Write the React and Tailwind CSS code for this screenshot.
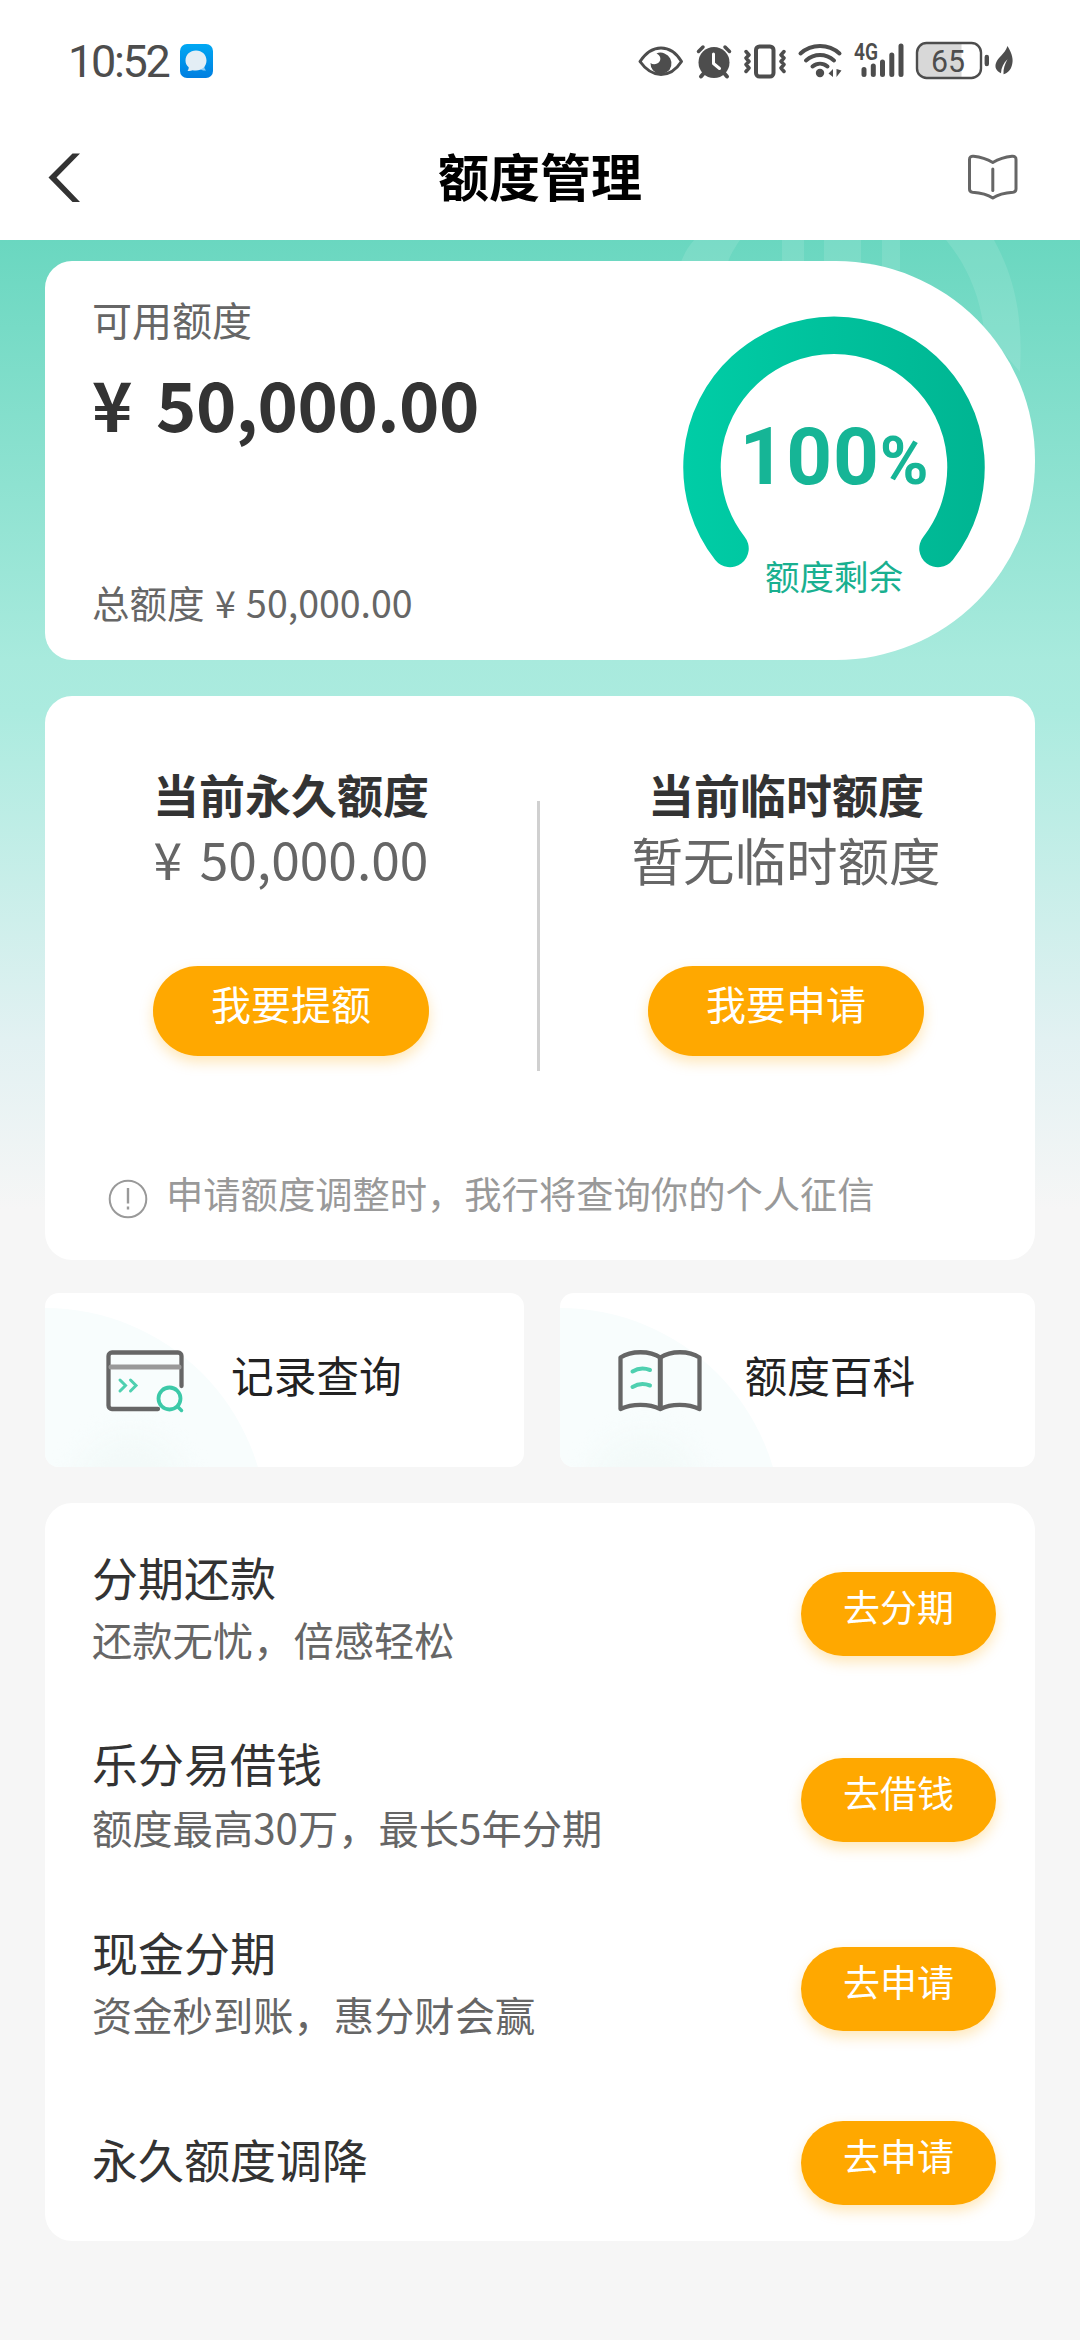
import clsx from "clsx";

const plans = [
  { title: "分期还款", desc: "还款无忧，倍感轻松", action: "去分期", row: "h-[186px]", pad: "pb-[16px]" },
  { title: "乐分易借钱", desc: "额度最高30万，最长5年分期", action: "去借钱", row: "h-[186px]", pad: "pb-[15px]", gap: "mt-[2px]" },
  { title: "现金分期", desc: "资金秒到账，惠分财会赢", action: "去申请", row: "h-[192px]", pad: "pb-[16px]" },
  { title: "永久额度调降", action: "去申请", row: "h-[156px]", pad: "pb-[11px]" },
];

function StatusIcons() {
  return (
    <svg width="380" height="60" viewBox="636 30 380 60" fill="none" stroke="#4d4d4d" strokeLinecap="round" strokeLinejoin="round">
      {/* eye */}
      <path d="M640 60.500C646 51.500 653 47 661 47s15 4.500 20.500 13.500C676 69 669 73.500 661 73.500S646 69 640 60.500z" strokeWidth="3" />
      <path d="M656.500 52.500c2.500-1.300 5.500-1.300 8 0a10.500 10.500 0 1 1-14 9.500c2.500 2 7 1.500 9-1.500 2-2.800.5-6.500-3-8z" fill="#4d4d4d" stroke="none" />
      {/* alarm */}
      <circle cx="714" cy="61.500" r="15.500" fill="#4d4d4d" stroke="none" />
      <path d="M698.500 50.500l4.500-4.500M729.500 50.500l-4.500-4.500" strokeWidth="3.500" />
      <path d="M704 72l-3 3.500M724 72l3 3.500" strokeWidth="4" />
      <path d="M713.500 53v9.500l6 5" stroke="#fff" strokeWidth="3" />
      {/* vibrate */}
      <rect x="756" y="45.500" width="17.500" height="30" rx="3.500" strokeWidth="4" />
      <path d="M746 50.500l3 3.500-3 3 3 3.500-3 3 3 3.500-3 3.500M784 50.500l-3 3.500 3 3-3 3.500 3 3-3 3.500 3 3.500" strokeWidth="3.500" />
      {/* wifi */}
      <path d="M800.500 52.500c11-10 28-10 39 0M806 59.500c8.500-7.200 19.500-7.200 28 0M812.500 65.500c4.500-3.800 10.500-3.800 15 0" strokeWidth="4" />
      <circle cx="820" cy="72" r="4.200" fill="#4d4d4d" stroke="none" />
      <path d="M833 68v8l-4.500-3.500zM836.500 68v8l5-6.500z" fill="#4d4d4d" stroke="none" />
      {/* signal */}
      <path d="M864 68.500v5M873.300 65v8.500M882.500 61v12.500M891.800 54v19.500M901 45v28.500" strokeWidth="5" />
      <text x="854" y="59" fontSize="23" fontWeight="600" textLength="24" lengthAdjust="spacingAndGlyphs" fill="#4d4d4d" stroke="none" fontFamily="Roboto, sans-serif">4G</text>
      {/* battery */}
      <path d="M927 42h34.500v35H927a9.500 9.500 0 0 1-9.500-9.500v-16A9.500 9.500 0 0 1 927 42z" fill="#d8d8d8" stroke="none" />
      <rect x="917" y="42" width="64" height="35" rx="9.500" strokeWidth="2.400" />
      <path d="M986.800 56v7" strokeWidth="4.400" />
      <text x="931" y="70.500" fontSize="32" textLength="34" lengthAdjust="spacingAndGlyphs" fill="#4d4d4d" stroke="none" fontFamily="Roboto, sans-serif">65</text>
      {/* leaf */}
      <path d="M1007.500 45c5 8 6 14 4.500 19-1.300 5-4 8-8.500 9.300-.5-5.500 1.500-10.500 4-15-4 4-6.300 8.500-6.500 14C996 70 994.500 66 996 62c2-6 8.500-8.500 11.500-17z" fill="#4d4d4d" stroke="none" />
    </svg>
  );
}

function MessageIcon() {
  return (
    <svg width="33" height="34" viewBox="0 0 33 34">
      <defs>
        <linearGradient id="msg" x1="0" y1="0" x2="0" y2="1">
          <stop offset="0" stopColor="#00a8f3" />
          <stop offset="1" stopColor="#007ee0" />
        </linearGradient>
      </defs>
      <rect width="33" height="34" rx="7" fill="url(#msg)" />
      <path d="M20 25c2.500 1.500 4 1.800 6 1.500-1.500-1.500-1.800-3-1.500-5z" fill="#8ccdf5" />
      <path d="M16 6.500c6 0 10.500 4.300 10.500 10S22 26.500 16 26.500c-1.500 0-2.500-.1-3.500-.3-1.500.7-3 1-5 .6 1-1 1.300-2.200 1.200-3.500C6.500 21.500 5.500 19.200 5.500 16.500c0-5.700 4.500-10 10.500-10z" fill="#e3eef5" />
    </svg>
  );
}

// faint bank emblem behind the first card
function Emblem() {
  return (
    <svg className="absolute right-[46px] top-0" width="380" height="160" viewBox="654 240 380 160" fill="#fff" fillOpacity="0.11">
      <path d="M782 240h22v30h-22zM824 240h37v30h-37zM882 240h18v30h-18z" />
      <path d="M694 240C688 247 684 254 681 262H728C731 253 736 246 740 240zM946 240C964 262 979 290 984 330L1020 372C1023 320 1016 280 994 240z" />
    </svg>
  );
}

function Gauge() {
  return (
    <svg width="302" height="302" viewBox="683 316.500 302 302" fill="none">
      <defs>
        <linearGradient id="gauge" gradientUnits="userSpaceOnUse" x1="683" y1="0" x2="985" y2="0">
          <stop offset="0" stopColor="#00cda6" />
          <stop offset="1" stopColor="#00b592" />
        </linearGradient>
      </defs>
      <path d="M730 549A132 132 0 1 1 938 549" stroke="url(#gauge)" strokeWidth="37.500" strokeLinecap="round" />
    </svg>
  );
}

function RecordIcon() {
  return (
    <svg width="80" height="64" viewBox="105 1349 80 64" fill="none" strokeLinecap="round">
      <path d="M158 1409H112a3.500 3.500 0 0 1-3.500-3.500V1356a3.500 3.500 0 0 1 3.500-3.500h66a3.500 3.500 0 0 1 3.500 3.500V1386" stroke="#666" strokeWidth="4.300" />
      <path d="M111 1367h68" stroke="#999" strokeWidth="5" />
      <path d="M120 1380l5.500 5.500-5.500 5.500M130.500 1380l5.500 5.500-5.500 5.500" stroke="#4fd0b0" strokeWidth="3" />
      <circle cx="169.500" cy="1398.500" r="11" stroke="#3cc9a8" strokeWidth="3.800" />
      <path d="M178 1407l3.500 3.500" stroke="#3cc9a8" strokeWidth="3.500" />
    </svg>
  );
}

function WikiIcon() {
  return (
    <svg width="86" height="66" viewBox="615 1348 86 66" fill="none" strokeLinejoin="round" strokeLinecap="round">
      <path d="M658.300 1357.500C648 1350.500 629 1350.500 618.500 1357.500V1409C630 1403.500 647 1403.500 658.300 1409C669 1403.500 686 1403.500 697.500 1409V1357.500C687 1350.500 669 1350.500 658.300 1357.500z" stroke="#666" strokeWidth="4.300" />
      <path d="M658.300 1358v50" stroke="#666" strokeWidth="5" />
      <path d="M630.500 1371.500c5.500-3.300 12-3.500 17.500-1.500M630.500 1387c5.500-3.300 12-3.500 17.500-1.500" stroke="#4fd0b0" strokeWidth="4" />
    </svg>
  );
}

function PillButton({ className, children }) {
  return (
    <button className={clsx("flex items-center justify-center rounded-full bg-[#ffa800] text-white shadow-[0_6px_14px_rgba(255,168,0,0.28)]", className)}>
      {children}
    </button>
  );
}

function QuotaColumn({ title, value, valueClass, action }) {
  return (
    <div className="flex w-[492px] flex-col items-center pt-[68px]">
      <h2 className="text-[46px] font-bold leading-[58px] text-[#333]">{title}</h2>
      <p className={clsx("whitespace-nowrap text-[#666]", valueClass)}>{value}</p>
      <PillButton className="mt-[72px] h-[90px] w-[276px] pb-[17px] text-[40px]">{action}</PillButton>
    </div>
  );
}

function QuickEntry({ icon, label, pad }) {
  return (
    <div className={clsx("relative flex h-[174px] flex-1 items-center overflow-hidden rounded-[14px] bg-white", pad)}>
      <div className="absolute -left-[222px] top-[15px] h-[444px] w-[444px] rounded-full bg-[#f8fdfd]" />
      <div className="absolute left-[30px] top-[140px] h-[120px] w-[110px] rounded-full bg-[#f3faf9] blur-md" />
      <div className="relative mt-[2px]">{icon}</div>
      <span className="relative -mt-[12px] text-[42.700px] text-[#222]">{label}</span>
    </div>
  );
}

export default function App() {
  return (
    <div className="flex h-[2340px] w-[1080px] flex-col bg-[#f6f6f6] font-['Noto_Sans_CJK_SC',sans-serif]">
      <header className="h-[240px] bg-white">
        <div className="flex h-[121px] items-center pl-[68px] pr-[64px]">
          <span className="mt-[3px] w-[112px] font-[Roboto,sans-serif] text-[45px] tracking-[-2.300px] text-[#4d4d4d]">10:52</span>
          <MessageIcon />
          <div className="ml-auto">
            <StatusIcons />
          </div>
        </div>
        <div className="flex h-[112px] items-center justify-between pl-[46px] pr-[60px]">
          <svg width="54" height="52" viewBox="46 150 54 52" fill="#333">
            <path d="M72.500 152.500H80L56.500 176.500 80 201h-7.500L48.500 176.500z" />
          </svg>
          <h1 className="ml-[14px] pb-[4px] text-[51px] font-bold text-black">额度管理</h1>
          <svg width="54" height="50" viewBox="966 152 54 50" fill="none" stroke="#666" strokeWidth="3" strokeLinecap="round" strokeLinejoin="round">
            <path d="M992.800 162.500C986 158.500 980 157 973.500 156.300c-2.500-.3-4 .8-4 3.200V189c0 2 1 3 3 3.200 7 .5 14 1.500 20.300 5.800 6.300-4.300 13-5.300 20.200-5.800 2-.2 3-1.200 3-3.200v-29.500c0-2.400-1.500-3.500-4-3.200-6.500.7-12.400 2.200-19.200 6.200z" />
            <path d="M992.800 169v21.500" />
          </svg>
        </div>
      </header>

      <main className="relative flex-1 bg-[linear-gradient(180deg,#6ad7c0_0px,#a8eadd_420px,#abebdf_470px,#e2f1f2_800px,#f6f6f6_970px)] px-[45px] pt-[21px]">
        <Emblem />
        <section className="relative flex h-[399px] justify-between rounded-l-[27px] rounded-r-[199px] bg-white pl-[47px] pr-[50px]">
          <div className="flex flex-col">
            <p className="mt-[26px] text-[40px] leading-[64px] text-[#666]">可用额度</p>
            <p className="mt-[10px] text-[68.500px] font-bold leading-[84px] tracking-[-0.500px] text-[#333] [word-spacing:9px]">¥ 50,000.00</p>
            <p className="mt-[129px] text-[37.500px] leading-[56px] text-[#666] [word-spacing:2px]">总额度 ¥ 50,000.00</p>
          </div>
          <div className="relative mt-[55px]">
            <Gauge />
            <div className="absolute inset-0 flex flex-col items-center">
              <p className="mt-[91px] flex items-baseline whitespace-nowrap font-[Roboto,sans-serif] font-bold leading-[100px] text-[#16b596]">
                <span className="text-[80px] tracking-[0.800px]">100</span>
                <span className="text-[66px]">%</span>
              </p>
              <p className="mt-[38px] text-[34.500px] leading-[50px] text-[#19b090]">额度剩余</p>
            </div>
          </div>
        </section>

        <section className="relative mt-[36px] flex h-[564px] flex-col rounded-[27px] bg-white">
          <div className="flex">
            <QuotaColumn title="当前永久额度" value="¥ 50,000.00" valueClass="text-[51.500px] leading-[72px] [word-spacing:6px]" action="我要提额" />
            <div className="mt-[105px] h-[270px] w-[3px] bg-[#d0d0d0]" />
            <QuotaColumn title="当前临时额度" value="暂无临时额度" valueClass="pt-px text-[51.500px] leading-[71px]" action="我要申请" />
          </div>
          <div className="mt-[92px] flex items-center pl-[63px] text-[37.300px] leading-[60px] text-[#999]">
            <svg className="mr-[18px] mt-[12px]" width="40" height="40" viewBox="0 0 40 40" fill="none" stroke="#999" strokeWidth="2">
              <circle cx="20" cy="20" r="18.300" />
              <path d="M20 9v15.500M20 27.500v3" strokeWidth="2.400" />
            </svg>
            申请额度调整时，我行将查询你的个人征信
          </div>
        </section>

        <div className="relative mt-[33px] flex gap-[36px]">
          <QuickEntry icon={<RecordIcon />} label="记录查询" pad="gap-[46px] pl-[60px]" />
          <QuickEntry icon={<WikiIcon />} label="额度百科" pad="gap-[42px] pl-[57px]" />
        </div>

        <section className="relative mt-[36px] h-[738px] rounded-[27px] bg-white pl-[47px] pr-[39px] pt-[18px]">
          {plans.map((plan) => (
            <div key={plan.title} className={clsx("flex items-center justify-between", plan.row)}>
              <div className={plan.pad}>
                <h3 className="text-[46px] leading-[66px] text-[#333]">{plan.title}</h3>
                {plan.desc && <p className={clsx("text-[40.300px] leading-[60px] text-[#666]", plan.gap)}>{plan.desc}</p>}
              </div>
              <PillButton className="h-[84px] w-[195px] pb-[14px] text-[37px]">{plan.action}</PillButton>
            </div>
          ))}
        </section>
      </main>
    </div>
  );
}
